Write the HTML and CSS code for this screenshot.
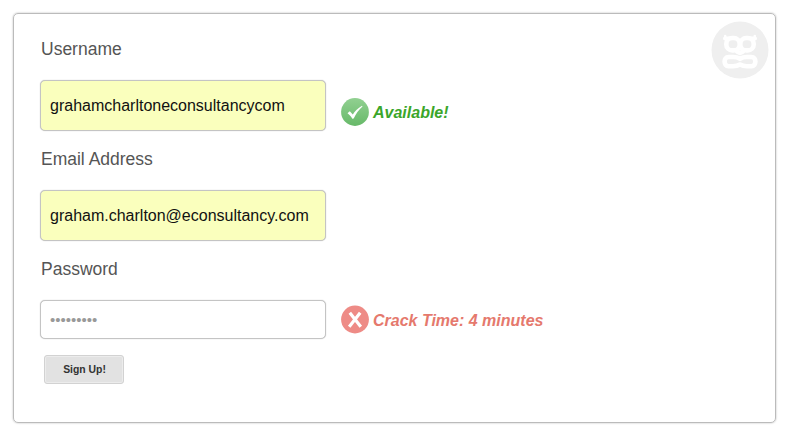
FILE: index.html
```html
<!DOCTYPE html>
<html lang="en">
<head>
    <meta charset="UTF-8">
    <meta name="viewport" content="width=device-width, initial-scale=1.0">
    <title>Sign Up</title>
    <link rel="stylesheet" href="styles.css">
</head>
<body>

    <form class="signup">
        <!-- Mascot badge -->
        <svg class="badge" viewBox="0 0 58 58">
            <circle cx="29" cy="29" r="28.5" fill="#efefef"/>
            <g fill="none" stroke="#fff" stroke-width="4.600" stroke-linecap="round" stroke-linejoin="round">
                <rect x="15.300" y="17" width="13.400" height="12.400" rx="6"/>
                <rect x="29.300" y="17" width="13.400" height="12.400" rx="6"/>
                <path d="M14 17.500h4M44 17.500h-4" stroke-width="4"/>
                <path d="M14.200 15v2M43.800 15v2" stroke-width="2.500"/>
                <path d="M26 30.500l3 1.500 3-1.500"/>
                <path d="M29 37.800C26.500 36.300 24.500 36 22 36h-4.500C12.300 36 12.300 45.200 17.500 45.200H22C24.500 45.200 26.500 45 29 43.500C31.500 45 33.500 45.200 36 45.200h4.500C45.700 45.200 45.700 36 40.500 36H36C33.500 36 31.500 36.300 29 37.800z"/>
            </g>
        </svg>

        <div class="field">
            <label for="username">Username</label>
            <div class="row">
                <input class="filled" type="text" id="username" value="grahamcharltoneconsultancycom">
                <div class="status available">
                    <svg viewBox="0 0 28 28">
                        <defs>
                            <linearGradient id="green" x1="0" y1="0" x2="0" y2="1">
                                <stop offset="0" stop-color="#91d091"/>
                                <stop offset="1" stop-color="#67b969"/>
                            </linearGradient>
                        </defs>
                        <circle cx="14" cy="14" r="13.9" fill="url(#green)"/>
                        <path d="M6.500 15.300l2.300-2 3 3.200c2.200-3.500 5-6.200 9.200-8.700l.5.600c-4 3.400-6.600 7.200-8.800 12.200l-1.400.2c-1.300-2.400-2.700-4-4.800-5.500z" fill="#fff"/>
                    </svg>
                    <span>Available!</span>
                </div>
            </div>
        </div>

        <div class="field">
            <label for="email">Email Address</label>
            <div class="row">
                <input class="filled" type="text" id="email" value="graham.charlton@econsultancy.com">
            </div>
        </div>

        <div class="field">
            <label for="password">Password</label>
            <div class="row">
                <input class="password" type="text" id="password" placeholder="•••••••••">
                <div class="status weak">
                    <svg viewBox="0 0 28 28">
                        <circle cx="14" cy="13.500" r="13.900" fill="#ee8b86"/>
                        <path d="M8.800 6.800L19.800 20.700M19.200 6.800L8.200 20.700" fill="none" stroke="#fff" stroke-width="3.200"/>
                    </svg>
                    <span>Crack Time: 4 minutes</span>
                </div>
            </div>
        </div>

        <button type="button">Sign Up!</button>
    </form>

</body>
</html>
```

FILE: styles.css
```css
/* Basic Reset */
* {
    margin: 0;
    padding: 0;
    box-sizing: border-box;
}
body {
    font-family: "Liberation Sans", Arial, sans-serif;
    background-color: #fff;
    color: #555;
    padding: 13px;
}

/* Card */
.signup {
    position: relative;
    width: 763px;
    height: 410px;
    padding: 25px 26px;
    border: 1px solid #bbb;
    border-radius: 5px;
    box-shadow: 0 0 2px rgba(0, 0, 0, 0.3);
}

.badge {
    position: absolute;
    top: 7px;
    right: 6px;
    width: 58px;
    height: 58px;
}

/* Fields */
.field {
    margin-bottom: 18px;
}

.field label {
    display: block;
    padding-left: 1px;
    font-size: 17.5px;
    line-height: 20px;
    margin-bottom: 21px;
}

.row {
    display: flex;
    align-items: center;
}

.row input {
    width: 286px;
    height: 51px;
    padding: 0 9px;
    border: 1px solid #c4c4c4;
    border-radius: 5px;
    box-shadow: 0 0 1px rgba(0, 0, 0, 0.3);
    font-family: inherit;
    font-size: 16px;
    color: #111;
    outline: none;
}

.row input.filled {
    background-color: #faffbd;
}

.row input.password {
    height: 39px;
    font-size: 15px;
}

.row input.password::placeholder {
    color: #999;
    opacity: 1;
}

/* Status messages */
.status {
    display: flex;
    align-items: center;
    margin-left: 15px;
    font-size: 16px;
    font-weight: bold;
    font-style: italic;
}

.status svg {
    width: 28px;
    height: 28px;
    margin-right: 4px;
    overflow: visible;
}

.status span {
    padding-top: 2px;
}

.status.available {
    padding-top: 13px;
    color: #3ba62a;
}

.status.weak {
    color: #e5796d;
}

/* Button */
button {
    display: block;
    width: 80px;
    height: 29px;
    margin: -2px 0 0 4px;
    padding-left: 1px;
    border: 1px solid #d2d2d2;
    border-radius: 3px;
    background-color: #e2e2e2;
    box-shadow: inset 0 0 0 1px #ececec;
    font-family: inherit;
    font-size: 10.4px;
    font-weight: bold;
    color: #333;
}
```
